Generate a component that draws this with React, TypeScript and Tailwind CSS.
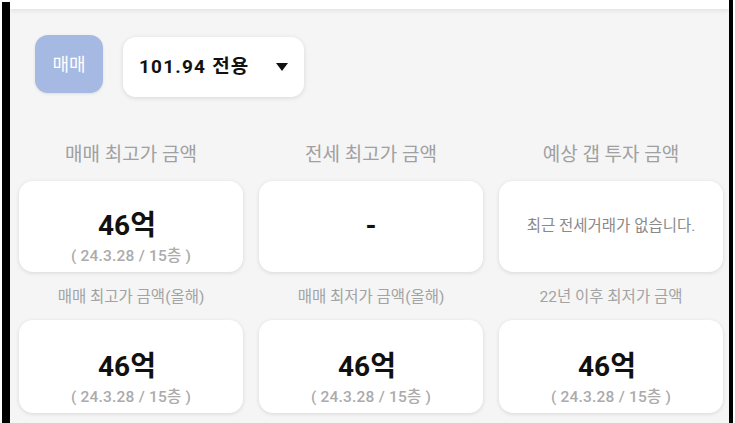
import React from 'react';

type Stat = {
  label: string;
  value?: string;
  sub?: string;
  empty?: string;
};

const topStats: Stat[] = [
  { label: '매매 최고가 금액', value: '46억', sub: '( 24.3.28 / 15층 )' },
  { label: '전세 최고가 금액', value: '-' },
  { label: '예상 갭 투자 금액', empty: '최근 전세거래가 없습니다.' },
];

const bottomStats: Stat[] = [
  { label: '매매 최고가 금액(올해)', value: '46억', sub: '( 24.3.28 / 15층 )' },
  { label: '매매 최저가 금액(올해)', value: '46억', sub: '( 24.3.28 / 15층 )' },
  { label: '22년 이후 최저가 금액', value: '46억', sub: '( 24.3.28 / 15층 )' },
];

const font = { fontFamily: 'Roboto, "Noto Sans CJK KR", sans-serif' };

function StatCard({ stat, small }: { stat: Stat; small?: boolean }) {
  return (
    <div className="flex flex-col items-center">
      <p
        className={
          small
            ? 'h-[20px] text-[15.5px] leading-[20px] text-[#a3a3a3]'
            : 'h-[26px] text-[19px] leading-[26px] text-[#a0a0a0]'
        }
      >
        {stat.label}
      </p>
      <div
        className={`flex w-full flex-col items-center rounded-[14px] bg-white shadow-[0_1px_4px_rgba(0,0,0,0.12)] ${
          small ? 'mt-[13px] h-[93px] pt-[29px]' : 'mt-[13px] h-[91px] pt-[27px]'
        }`}
      >
        {stat.empty ? (
          <p className="text-[15.5px] leading-[36px] text-[#8a8a8a]">{stat.empty}</p>
        ) : (
          <>
            <p
              className={`text-[28px] font-bold leading-[36px] text-[#111] ${
                stat.sub ? 'pr-[8px]' : ''
              }`}
            >
              {stat.value}
            </p>
            {stat.sub && (
              <p className="mt-[2px] text-[15.5px] font-medium leading-[20px] tracking-[0.2px] text-[#ababab]">
                {stat.sub}
              </p>
            )}
          </>
        )}
      </div>
    </div>
  );
}

export default function App() {
  return (
    <div className="flex h-[423px] w-[735px] overflow-hidden bg-white" style={font}>
      <div className="w-[2px]" />
      <div className="mt-[2px] w-[8px] bg-black" />
      <main className="flex flex-1 flex-col bg-[#f5f5f5]">
        <div className="h-[9px] bg-white shadow-[0_2px_5px_rgba(0,0,0,0.08)]" />

        <div className="flex items-start gap-[20px] pl-[25px] pt-[26px]">
          <button
            type="button"
            className="flex h-[58px] w-[68px] items-center justify-center rounded-[13px] bg-[#a5b9e3] text-[18px] text-white shadow-[0_1px_3px_rgba(0,0,0,0.1)]"
          >
            매매
          </button>
          <button
            type="button"
            className="mt-[2px] flex h-[60px] w-[181px] items-center justify-between rounded-[13px] bg-white pl-[16px] pr-[16px] shadow-[0_1px_5px_rgba(0,0,0,0.12)]"
          >
            <span className="text-[19px] font-bold tracking-[1.2px] text-[#111]">101.94 전용</span>
            <svg width="12" height="8" viewBox="0 0 12 8" aria-hidden>
              <path d="M0 0h12L6 8z" fill="#111" />
            </svg>
          </button>
        </div>

        <div className="ml-[9px] mt-[45px] grid w-[704px] grid-cols-3 gap-x-[16px]">
          {topStats.map((s) => (
            <StatCard key={s.label} stat={s} />
          ))}
        </div>

        <div className="ml-[9px] mt-[15px] grid w-[704px] grid-cols-3 gap-x-[16px]">
          {bottomStats.map((s) => (
            <StatCard key={s.label} stat={s} small />
          ))}
        </div>
      </main>
      <div className="w-[4px] bg-black" />
      <div className="w-[2px]" />
    </div>
  );
}
